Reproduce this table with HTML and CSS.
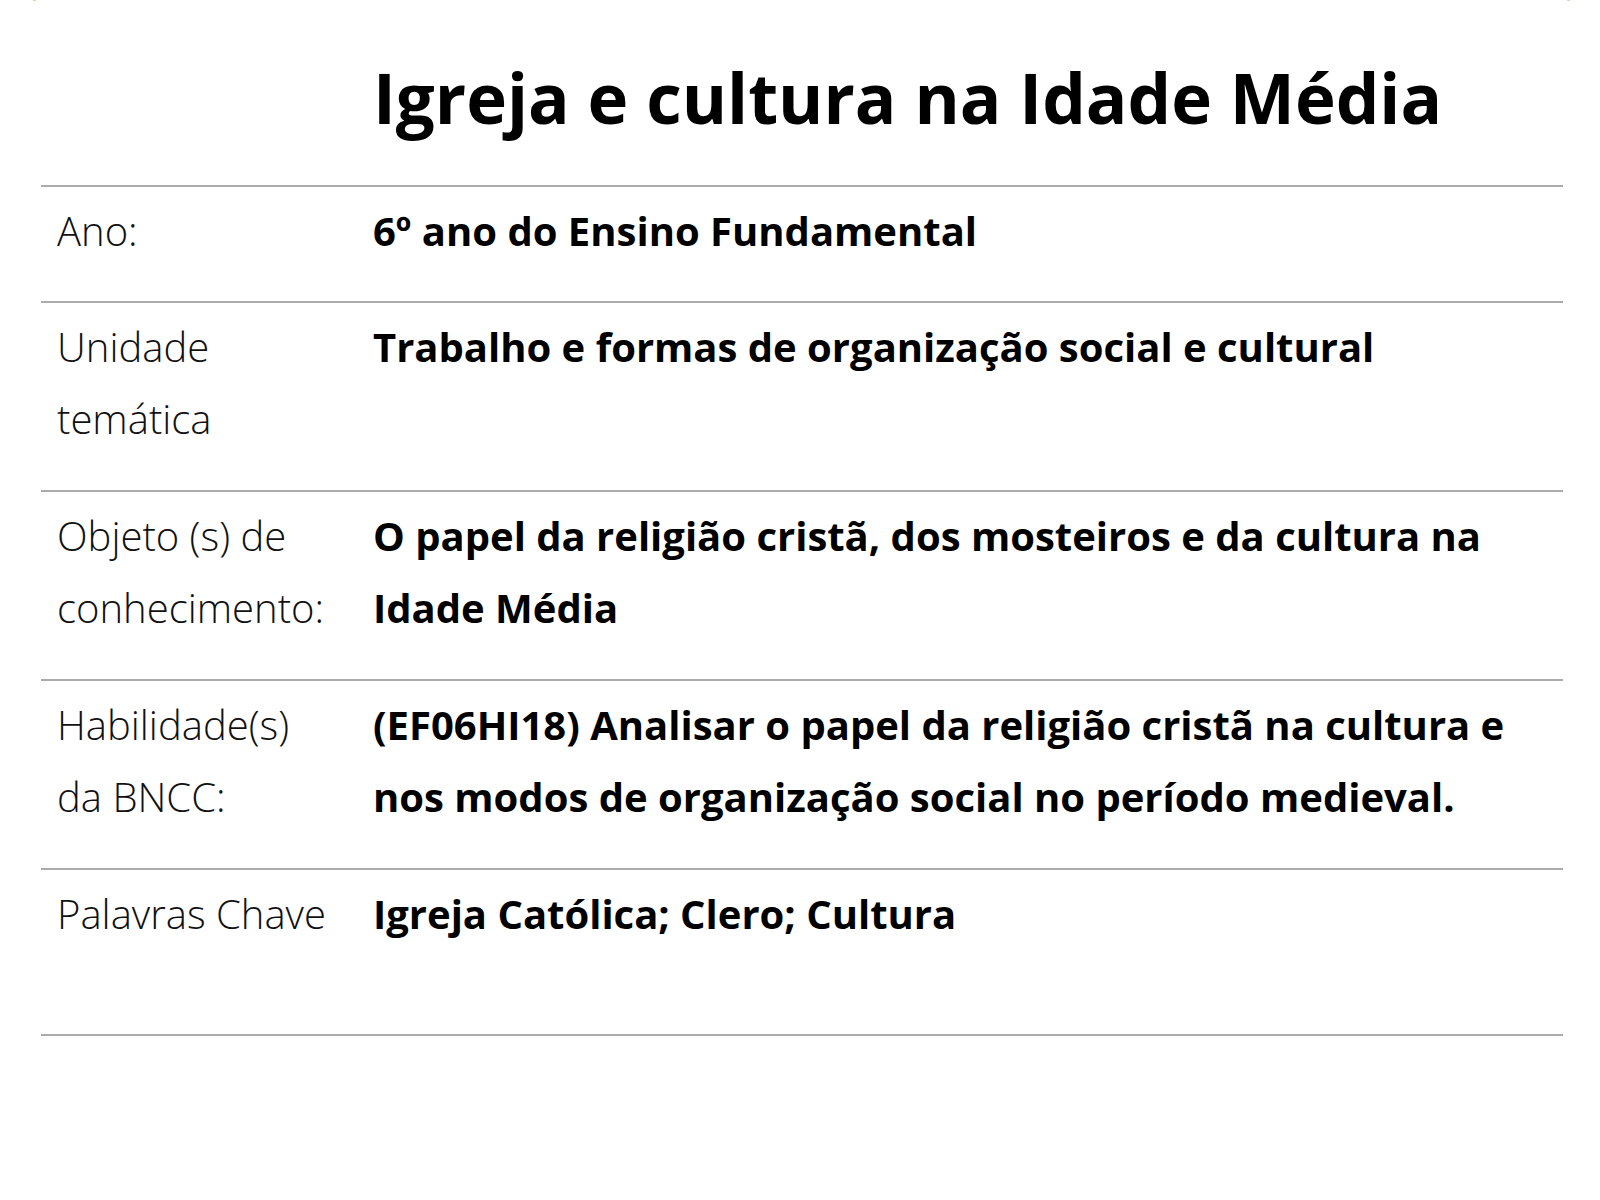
FILE: index.html
```html
<!DOCTYPE html>
<html lang="pt">
<head>
<meta charset="utf-8">
<title>Igreja e cultura na Idade Média</title>
<link rel="stylesheet" href="styles.css">
</head>
<body>
<main class="sheet">
  <span class="corner corner-left"></span>
  <span class="corner corner-right"></span>
  <h1 class="title">Igreja e cultura na Idade Média</h1>
  <div class="table">
    <div class="row row-1">
      <div class="label">Ano:</div>
      <div class="value">6º ano do Ensino Fundamental</div>
    </div>
    <div class="row row-2">
      <div class="label">Unidade temática</div>
      <div class="value">Trabalho e formas de organização social e cultural</div>
    </div>
    <div class="row row-2">
      <div class="label">Objeto (s) de conhecimento:</div>
      <div class="value">O papel da religião cristã, dos mosteiros e da cultura na Idade Média</div>
    </div>
    <div class="row row-2">
      <div class="label">Habilidade(s) da BNCC:</div>
      <div class="value">(EF06HI18) Analisar o papel da religião cristã na cultura e nos modos de organização social no período medieval.</div>
    </div>
    <div class="row row-last">
      <div class="label">Palavras Chave</div>
      <div class="value">Igreja Católica; Clero; Cultura</div>
    </div>
  </div>
</main>
</body>
</html>
```
FILE: styles.css
```css
html, body {
  margin: 0;
  padding: 0;
  background: #ffffff;
}
body {
  font-family: "Open Sans", "Noto Sans", sans-serif;
  color: #000;
}
.sheet {
  position: relative;
  padding: 0 37px 0 41px;
}
.corner {
  position: absolute;
  top: 0;
  width: 3px;
  height: 1px;
  background: #bfe6ae;
}
.corner-left { left: 33px; }
.corner-right { left: 1567px; }
.title {
  margin: 0;
  padding: 50px 0 0 332px;
  height: 185px;
  box-sizing: border-box;
  font-size: 69px;
  font-weight: 700;
  line-height: 94px;
  white-space: nowrap;
}
.table {
  border-top: 2px solid #ababab;
}
.row {
  display: grid;
  grid-template-columns: 332px 1fr;
  border-bottom: 2px solid #ababab;
  box-sizing: border-box;
  padding: 8px 0 0 0;
  font-size: 40px;
  line-height: 72px;
}
.row-1 { height: 116px; }
.row-2 { height: 189px; }
.row-last { height: 166px; }
.label {
  font-weight: 300;
  color: #111;
  padding-left: 16px;
  padding-right: 41px;
}
.value {
  font-weight: 700;
}
```
